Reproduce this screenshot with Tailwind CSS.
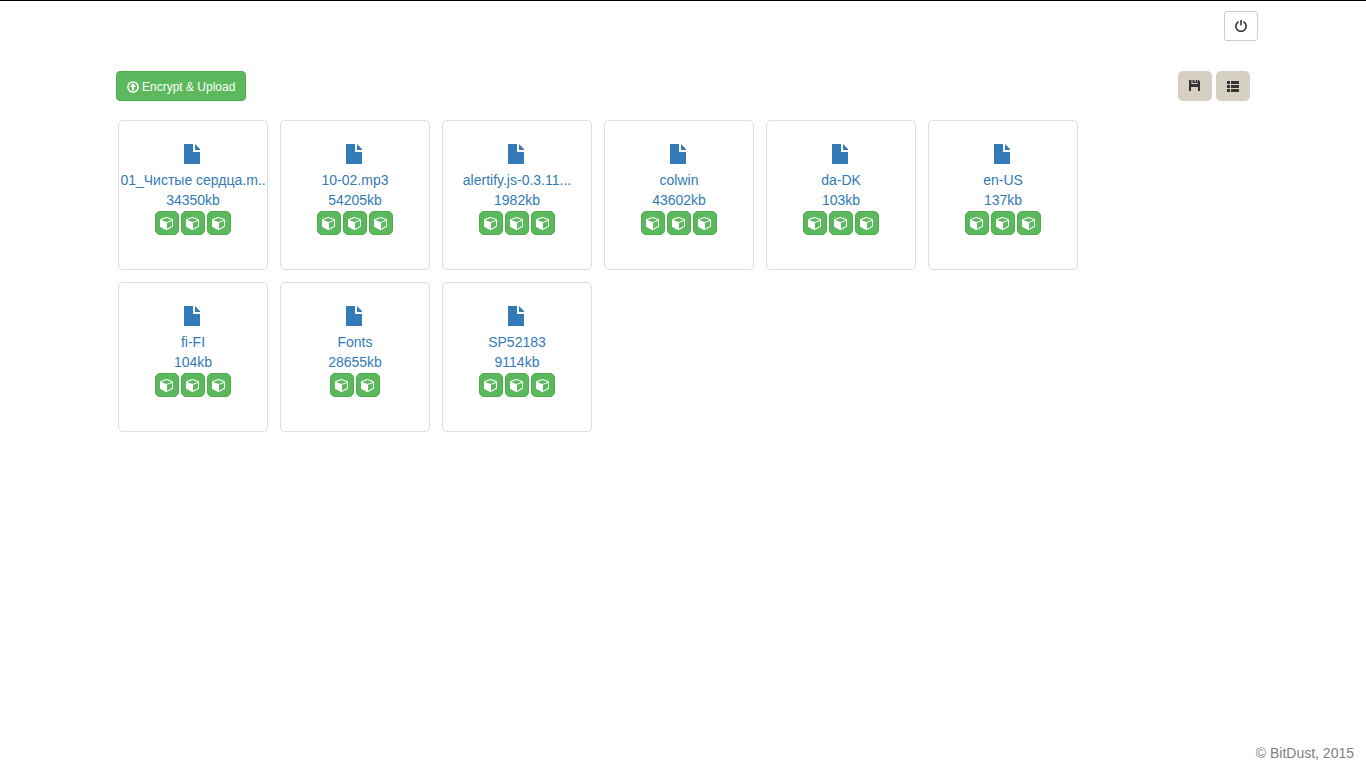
<!DOCTYPE html>
<html lang="en">
<head>
<meta charset="utf-8">
<meta name="viewport" content="width=device-width, initial-scale=1">
<title>BitDust</title>
<script src="https://cdn.jsdelivr.net/npm/@tailwindcss/browser@4"></script>
</head>
<body class="flex min-h-screen flex-col border-t border-black bg-white font-['Liberation_Sans',Arial,sans-serif] text-sm leading-5 text-[#333333]">
<svg class="hidden" aria-hidden="true">
  <symbol id="file" viewBox="0 0 16 20"><path d="M0 0H9V8H16V20H0Z M11 0L16 5V6H11Z"/></symbol>
  <symbol id="cube" viewBox="0 0 1792 1792"><path fill-rule="evenodd" d="M896 1629l640-349v-636l-640 233v752zM832 764l698-254-698-254-698 254zM1664 512v768q0 36-19 67t-52 49l-704 384q-28 16-61 16t-61-16l-704-384q-33-18-52-49t-19-67v-768q0-40 23-73t61-47l704-256q22-8 44-8t44 8l704 256q38 14 61 47t23 73z"/></symbol>
</svg>

<div class="mx-auto w-full max-w-[1170px]">
  <header class="flex justify-end px-[10px] pt-[10px]">
    <button type="button" aria-label="Log out" class="flex h-[30px] w-[34px] items-center justify-center rounded-[3px] border border-[#cccccc] bg-white">
      <svg class="size-3" viewBox="0 0 12 12" fill="none" stroke="#333333" stroke-width="1.600" aria-hidden="true"><path d="M3.500 1.800A5.100 5.100 0 1 0 8.500 1.800M6 0V5.500"/></svg>
    </button>
  </header>

  <main class="px-[18px] pt-[30px]">
    <div class="flex items-center justify-between">
      <button type="button" class="flex h-[30px] items-center gap-[3px] rounded-[4px] border border-[#4cae4c] bg-[#5cb85c] px-[10px] pt-px text-xs text-white">
        <svg class="size-3" viewBox="0 0 12 12" aria-hidden="true"><circle cx="6" cy="6" r="5.100" fill="none" stroke="white" stroke-width="1.500"/><path fill="white" d="M6 2.300L9.200 5.800H7.100V9.200H4.900V5.800H2.800Z"/></svg>
        Encrypt &amp; Upload
      </button>
      <div class="flex gap-1">
        <button type="button" aria-label="Save" class="flex h-[30px] w-[34px] items-center justify-center rounded-[5px] bg-[#d6d0c2]">
          <svg class="size-3" viewBox="0 0 12 12" fill="#333333" aria-hidden="true"><path d="M0 0H2.500V4H8.500V0H9.500L11 1.500V11H9V7H2V11H0Z M3.500 0H5.500V3H3.500Z M6.700 0H8V3H5.500V2H6.700Z"/></svg>
        </button>
        <button type="button" aria-label="List view" class="flex h-[30px] w-[34px] items-center justify-center rounded-[5px] bg-[#d6d0c2]">
          <svg class="h-[11px] w-3" viewBox="0 0 12 11" fill="#333333" aria-hidden="true"><path d="M0 0H3V3H0ZM4 0H12V3H4ZM0 4H3V7H0ZM4 4H12V7H4ZM0 8H3V11H0ZM4 8H12V11H4Z"/></svg>
        </button>
      </div>
    </div>
    <ul id="files" class="mt-[19px] flex flex-wrap gap-3 pr-6 pl-[2px]"></ul>
  </main>
</div>

<footer class="mt-auto px-3 pb-[5px] text-right text-[#808080]">© BitDust, 2015</footer>

<script>
const files = [
  ["01_Чистые сердца.m..", "34350kb", 3], ["10-02.mp3", "54205kb", 3],
  ["alertify.js-0.3.11...", "1982kb", 3], ["colwin", "43602kb", 3],
  ["da-DK", "103kb", 3], ["en-US", "137kb", 3],
  ["fi-FI", "104kb", 3], ["Fonts", "28655kb", 2], ["SP52183", "9114kb", 3]
];
const block = `<button type="button" aria-label="Block" class="flex size-6 items-center justify-center rounded-[5px] border border-[#4cae4c] bg-[#5cb85c]"><svg class="size-[14px]" fill="white" aria-hidden="true"><use href="#cube"/></svg></button>`;
document.getElementById("files").innerHTML = files.map(([name, size, blocks]) => `
  <li class="flex size-[150px] flex-col items-center overflow-hidden rounded-[5px] border border-[#dddddd] pt-[23px]">
    <a href="#" class="flex w-full flex-col items-center text-[#337ab7]">
      <svg class="mr-[2px] mb-[6px] h-5 w-4" fill="currentColor" aria-hidden="true"><use href="#file"/></svg>
      <span class="max-w-full overflow-hidden whitespace-nowrap">${name}</span>
      <span>${size}</span>
    </a>
    <div class="mt-px flex gap-[2px]">${block.repeat(blocks)}</div>
  </li>`).join("");
</script>
</body>
</html>
